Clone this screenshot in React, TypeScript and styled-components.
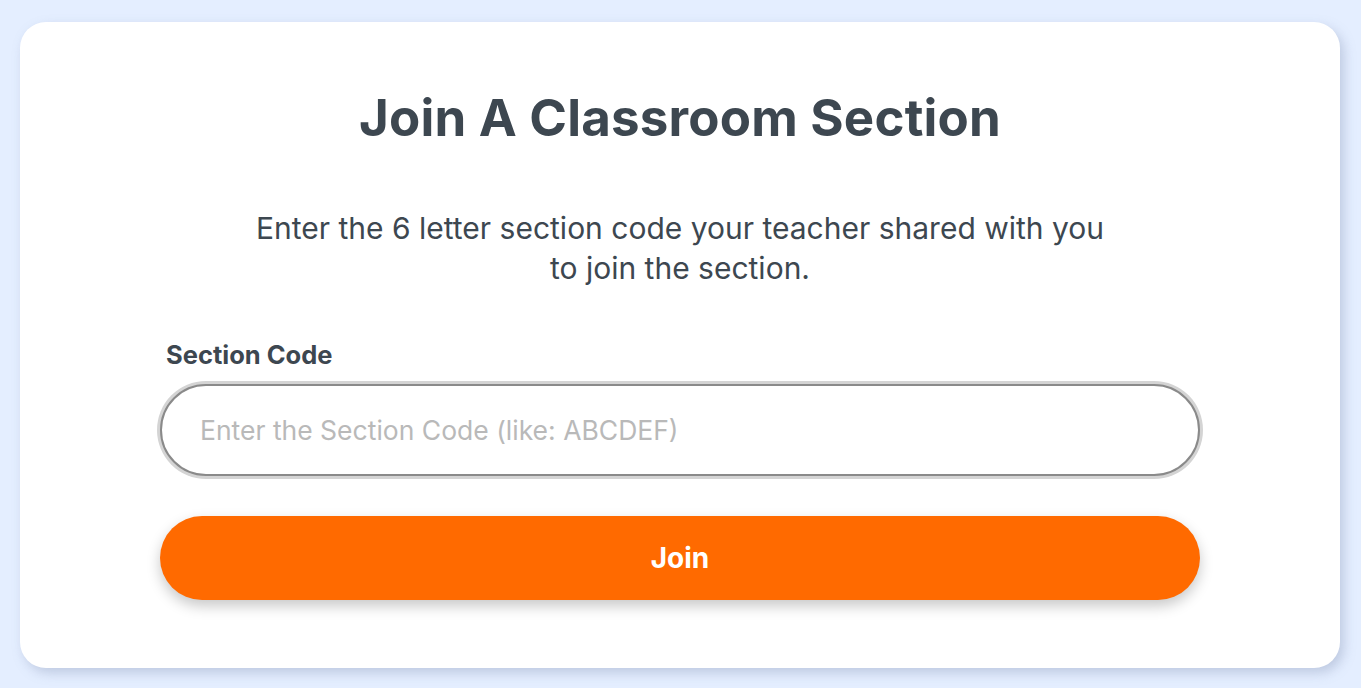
import React, { useState } from 'react';
import styled, { createGlobalStyle } from 'styled-components';

const GlobalStyle = createGlobalStyle`
  html, body {
    margin: 0;
    padding: 0;
    background: #e4eeff;
    font-family: 'Inter', 'Noto Sans', sans-serif;
  }
  * { box-sizing: border-box; }
`;

const Page = styled.div`
  min-height: 688px;
  padding: 22px 21px 21px 20px;
`;

const Card = styled.div`
  background: #ffffff;
  border-radius: 26px;
  box-shadow: 4px 5px 12px rgba(120, 135, 170, 0.35);
  padding: 63px 140px 68px;
  display: flex;
  flex-direction: column;
  align-items: center;
`;

const Title = styled.h1`
  margin: 0;
  font-size: 51px;
  line-height: 66px;
  font-weight: 700;
  color: #3d4750;
  letter-spacing: 0.2px;
`;

const Description = styled.p`
  margin: 57px 0 0;
  max-width: 860px;
  text-align: center;
  font-size: 30px;
  line-height: 40px;
  color: #3d4750;
`;

const Form = styled.form`
  width: 100%;
  margin-top: 54px;
  display: flex;
  flex-direction: column;
`;

const Label = styled.label`
  font-size: 25.5px;
  line-height: 26px;
  font-weight: 700;
  color: #3d4750;
  padding-left: 6px;
  margin-bottom: 16px;
`;

const Input = styled.input`
  width: 100%;
  height: 92px;
  border-radius: 46px;
  border: 2px solid #8a8a8a;
  box-shadow: 0 0 0 3px #d4d4d4;
  padding: 0 38px;
  font-family: inherit;
  font-size: 26.5px;
  color: #3d4750;
  outline: none;

  &::placeholder {
    color: #b9b9b9;
  }
`;

const JoinButton = styled.button`
  margin-top: 40px;
  height: 84px;
  border: none;
  border-radius: 42px;
  background: #ff6a00;
  color: #ffffff;
  font-family: inherit;
  font-size: 28px;
  font-weight: 700;
  cursor: pointer;
  box-shadow: 0 6px 14px rgba(0, 0, 0, 0.22);
`;

const App: React.FC = () => {
  const [code, setCode] = useState('');

  return (
    <>
      <GlobalStyle />
      <Page>
        <Card>
          <Title>Join A Classroom Section</Title>
          <Description>
            Enter the 6 letter section code your teacher shared with you to join the section.
          </Description>
          <Form onSubmit={(e) => e.preventDefault()}>
            <Label htmlFor="section-code">Section Code</Label>
            <Input
              id="section-code"
              value={code}
              onChange={(e) => setCode(e.target.value)}
              placeholder="Enter the Section Code (like: ABCDEF)"
            />
            <JoinButton type="submit">Join</JoinButton>
          </Form>
        </Card>
      </Page>
    </>
  );
};

export default App;
